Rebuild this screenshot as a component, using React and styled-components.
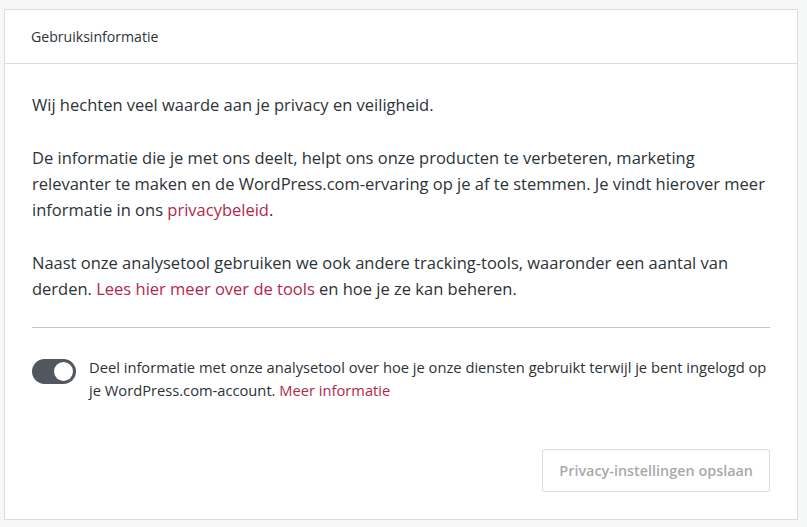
import React from "react";
import styled, { createGlobalStyle } from "styled-components";

const GlobalStyle = createGlobalStyle`
  html, body {
    margin: 0;
    padding: 0;
    background: #f6f7f7;
    font-family: "Open Sans", "Noto Sans", sans-serif;
    color: #2c3338;
  }
`;

const Page = styled.div`
  padding: 9px 9px 7px 4px;
`;

const Card = styled.section`
  background: #fff;
  border: 1px solid #dcdcde;
`;

const Header = styled.header`
  height: 53px;
  display: flex;
  align-items: center;
  padding: 0 26px;
  border-bottom: 1px solid #dcdcde;
  font-size: 14.1px;
  color: #2c3338;
`;

const Body = styled.div`
  padding: 28px 27px 27px 27px;
`;

const Paragraph = styled.p`
  margin: 0 0 27px;
  font-size: 16.5px;
  line-height: 26px;
`;

const Link = styled.a`
  color: #b0294a;
  text-decoration: none;
`;

const Divider = styled.hr`
  border: 0;
  border-top: 1px solid #c3c4c7;
  margin: -2px 0 0;
`;

const ToggleRow = styled.div`
  display: flex;
  align-items: flex-start;
  gap: 13px;
  margin-top: 28px;
`;

const Toggle = styled.span`
  flex: none;
  width: 44px;
  height: 25px;
  margin-top: 3px;
  border-radius: 13px;
  background: ${(p) => (p.$on ? "#50575e" : "#c3c4c7")};
  display: flex;
  align-items: center;
  justify-content: ${(p) => (p.$on ? "flex-end" : "flex-start")};
  padding: 0 3px;
  box-sizing: border-box;
`;

const Knob = styled.span`
  width: 19px;
  height: 19px;
  border-radius: 50%;
  background: #fff;
`;

const ToggleText = styled.p`
  margin: 0;
  font-size: 14.7px;
  line-height: 23px;
`;

const Actions = styled.div`
  display: flex;
  justify-content: flex-end;
  margin-top: 47px;
`;

const Button = styled.button`
  font-family: inherit;
  font-size: 14.4px;
  font-weight: 600;
  color: #a7aaad;
  background: #fff;
  border: 1px solid #dcdcde;
  border-radius: 2px;
  height: 43px;
  padding: 0 16px;
  cursor: default;
`;

export default function App() {
  return (
    <>
      <GlobalStyle />
      <Page>
        <Card>
          <Header>Gebruiksinformatie</Header>
          <Body>
            <Paragraph>Wij hechten veel waarde aan je privacy en veiligheid.</Paragraph>
            <Paragraph>
              De informatie die je met ons deelt, helpt ons onze producten te verbeteren, marketing
              relevanter te maken en de WordPress.com-ervaring op je af te stemmen. Je vindt hierover
              meer informatie in ons <Link href="#">privacybeleid</Link>.
            </Paragraph>
            <Paragraph>
              Naast onze analysetool gebruiken we ook andere tracking-tools, waaronder een aantal van
              derden. <Link href="#">Lees hier meer over de tools</Link> en hoe je ze kan beheren.
            </Paragraph>
            <Divider />
            <ToggleRow>
              <Toggle $on>
                <Knob />
              </Toggle>
              <ToggleText>
                Deel informatie met onze analysetool over hoe je onze diensten gebruikt terwijl je bent
                ingelogd op je WordPress.com-account. <Link href="#">Meer informatie</Link>
              </ToggleText>
            </ToggleRow>
            <Actions>
              <Button disabled>Privacy-instellingen opslaan</Button>
            </Actions>
          </Body>
        </Card>
      </Page>
    </>
  );
}
